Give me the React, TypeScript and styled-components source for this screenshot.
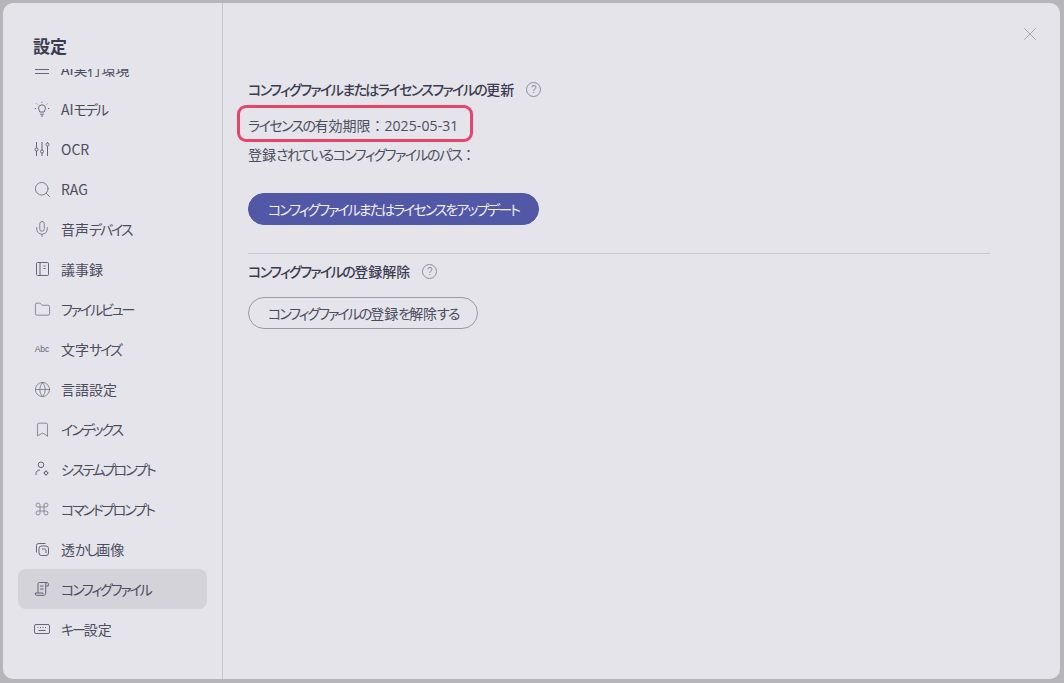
import { ReactNode } from "react";
import styled, { createGlobalStyle } from "styled-components";
import { Bookmark, Command, Folder, Globe, Mic, Search, X } from "lucide-react";

const GlobalStyle = createGlobalStyle`
  html, body {
    margin: 0;
    padding: 0;
    height: 100%;
    overflow: hidden;
    background: #b6b6ba;
  }
  * {
    box-sizing: border-box;
  }
`;

const Backdrop = styled.div`
  width: 1064px;
  height: 683px;
  padding: 3px 4px 4px 3px;
  font-family: "Noto Sans CJK JP", "Noto Sans", sans-serif;
  color: #4c4c60;
`;

const Modal = styled.div`
  position: relative;
  display: flex;
  height: 100%;
  background: #e4e4ea;
  border-radius: 10px;
  overflow: hidden;
`;

const Sidebar = styled.aside`
  display: flex;
  flex-direction: column;
  width: 220px;
  height: 100%;
  padding: 31px 15px 0;
  border-right: 1px solid #c6c6cc;
`;

const SidebarTitle = styled.h2`
  margin: 0 0 11px 15px;
  font-size: 17px;
  line-height: 24px;
  font-weight: 700;
  color: #3c3c50;
`;

const MenuClip = styled.div`
  flex: 1;
  overflow: hidden;
`;

const Menu = styled.ul`
  list-style: none;
  margin: -20px 0 0;
  padding: 0;
`;

const MenuItem = styled.li<{ $active?: boolean }>`
  --kana-track: -2.1px;
  display: flex;
  align-items: center;
  gap: 11px;
  width: 189px;
  height: 40px;
  padding-left: 16px;
  border-radius: 8px;
  font-size: 14px;
  background: ${(props) => (props.$active ? "#d3d3d9" : "transparent")};
`;

const IconSlot = styled.span`
  display: flex;
  align-items: center;
  justify-content: center;
  flex: none;
  width: 16px;
  height: 16px;
  color: #66667a;

  svg {
    flex: none;
  }
`;

const AbcGlyph = styled.span`
  font-family: "Liberation Sans", sans-serif;
  font-size: 8.5px;
  color: #66667a;
`;

// kana in the reference are condensed, kanji keep their full width
const KanaRun = styled.span`
  font-feature-settings: "palt";
  letter-spacing: var(--kana-track, -1.6px);
`;

const Main = styled.main`
  flex: 1;
  padding: 75px 70px 0 25px;
`;

const SectionTitle = styled.div`
  display: flex;
  align-items: center;
  gap: 12px;
  height: 22px;
  font-size: 14px;
  font-weight: 500;
  color: #3c3c50;
`;

const HelpMark = styled.span`
  display: inline-flex;
  align-items: center;
  justify-content: center;
  width: 15px;
  height: 15px;
  border: 1px solid #8e8e9e;
  border-radius: 50%;
  font-family: "Liberation Sans", sans-serif;
  font-size: 10px;
  font-weight: 400;
  color: #8e8e9e;
`;

const InfoLine = styled.p`
  margin: 0;
  height: 30px;
  line-height: 30px;
  font-size: 14px;
`;

const LicenseLine = styled(InfoLine)`
  position: relative;
  margin-top: 10px;
  margin-bottom: -1px;
`;

const DateText = styled.span`
  font-family: "Open Sans", sans-serif;
  font-size: 14px;
  letter-spacing: 0.1px;
`;

const Highlight = styled.span`
  position: absolute;
  left: -11px;
  top: -5px;
  width: 236px;
  height: 37px;
  border: 3px solid #e8436b;
  border-radius: 9px;
`;

const PillButton = styled.button<{ $primary?: boolean }>`
  --kana-track: -2px;
  display: block;
  height: 32px;
  padding: 0 19px;
  border-radius: 16px;
  font-family: inherit;
  font-size: 14px;
  color: ${(props) => (props.$primary ? "#f0f0f6" : "#4c4c60")};
  background: ${(props) => (props.$primary ? "#5257a6" : "transparent")};
  border: 1px solid ${(props) => (props.$primary ? "#5257a6" : "#9a9aa6")};
`;

const UpdateBlock = styled.div`
  margin-top: 24px;
`;

const Divider = styled.hr`
  margin: 28px 0 6px;
  border: 0;
  border-top: 1px solid #c6c6cc;
`;

const UnregisterRow = styled.div`
  margin-top: 15px;
`;

const CloseButton = styled.span`
  position: absolute;
  top: 20px;
  right: 19px;
  display: flex;
  color: #a2a2ae;
`;

const Icon = styled.svg.attrs({ fill: "none", stroke: "currentColor" })``;

const Jp = ({ text }: { text: string }) => (
  <span>
    {text.split(/([\u3040-\u30ff]+)/).map((part, index) =>
      /[\u3040-\u30ff]/.test(part) ? <KanaRun key={index}>{part}</KanaRun> : part
    )}
  </span>
);

const RuntimeIcon = () => (
  <Icon width="16" height="16" viewBox="0 0 16 16">
    <path d="M1 4.5h14M1 8.5h14M1 12.5h14" />
  </Icon>
);

const BulbIcon = () => (
  <Icon width="16" height="16" viewBox="0 0 16 16">
    <path d="M5.8 11c0-1.4-1.3-2-1.3-3.7a3.5 3.5 0 0 1 7 0c0 1.7-1.3 2.3-1.3 3.7zM6.2 13.2h3.6M7 15h2" />
    <path d="M8 .8v1M2.4 2.6l.8.8M13.6 2.6l-.8.8M.8 7.5h1.2M14 7.5h1.2" />
  </Icon>
);

const SlidersIcon = () => (
  <Icon width="16" height="16" viewBox="0 0 16 16">
    <path d="M2.5 1v6M2.5 10v5M8 1v8M8 12v3M13.5 1v1M13.5 5v10" />
    <circle cx="2.5" cy="8.5" r="1.5" />
    <circle cx="8" cy="10.5" r="1.5" />
    <circle cx="13.5" cy="3.5" r="1.5" />
  </Icon>
);

const NotebookIcon = () => (
  <Icon width="15" height="16" viewBox="0 0 15 16">
    <rect x="1.5" y="1.5" width="12" height="13" rx="1" />
    <path d="M5 1.5v13M8.5 5h2M8.5 7.5h2" />
  </Icon>
);

const UserGearIcon = () => (
  <Icon width="16" height="16" viewBox="0 0 16 16">
    <circle cx="7" cy="3.8" r="2.8" />
    <path d="M2 14v-1.5C2 10.5 3.5 9 6 9" />
    <circle cx="12" cy="12" r="1.6" />
    <path d="M12 9.2v1.2M12 13.6v1.2M9.4 12h1M13.6 12h1" />
  </Icon>
);

const LayersIcon = () => (
  <Icon width="15" height="15" viewBox="0 0 15 15">
    <path d="M10.5 1.5h-7a2 2 0 0 0-2 2v7" />
    <rect x="4" y="4" width="9.5" height="9.5" rx="2.5" />
    <path d="M7 7h2.5a1.5 1.5 0 0 1 1.5 1.5V11" />
  </Icon>
);

const ScrollIcon = () => (
  <Icon width="16" height="16" viewBox="0 0 16 16">
    <path d="M4 12V2.8C4 2 4.6 1.5 5.4 1.5H13c-.8 0-1.3.6-1.3 1.4V12.5c0 1-.7 1.8-1.7 1.8H2.5c-.8 0-1.2-.7-1.2-1.3V12H9v1" />
    <path d="M12 5h2.3V3c0-.9-.5-1.5-1.3-1.5M6 5h3.5M6 8h3.5" />
  </Icon>
);

const KeyboardIcon = () => (
  <Icon width="16" height="12" viewBox="0 0 16 12">
    <rect x=".5" y="1.5" width="15" height="9" rx="1.5" />
    <path d="M3.5 4.5h1M6 4.5h1M8.5 4.5h1M11 4.5h1M4.5 7.5h7" />
  </Icon>
);

const items: { label: string; icon: ReactNode; active?: boolean }[] = [
  { label: "AI実行環境", icon: <RuntimeIcon /> },
  { label: "AIモデル", icon: <BulbIcon /> },
  { label: "OCR", icon: <SlidersIcon /> },
  { label: "RAG", icon: <Search size={19} strokeWidth={1} /> },
  { label: "音声デバイス", icon: <Mic size={18} strokeWidth={1} /> },
  { label: "議事録", icon: <NotebookIcon /> },
  { label: "ファイルビュー", icon: <Folder size={17} strokeWidth={1} /> },
  { label: "文字サイズ", icon: <AbcGlyph>Abc</AbcGlyph> },
  { label: "言語設定", icon: <Globe size={17} strokeWidth={1} /> },
  { label: "インデックス", icon: <Bookmark size={17} strokeWidth={1} /> },
  { label: "システムプロンプト", icon: <UserGearIcon /> },
  { label: "コマンドプロンプト", icon: <Command size={16} strokeWidth={1} /> },
  { label: "透かし画像", icon: <LayersIcon /> },
  { label: "コンフィグファイル", icon: <ScrollIcon />, active: true },
  { label: "キー設定", icon: <KeyboardIcon /> },
];

const App = () => {
  return (
    <>
      <GlobalStyle />
      <Backdrop>
        <Modal>
          <Sidebar>
            <SidebarTitle>設定</SidebarTitle>
            <MenuClip>
              <Menu>
                {items.map((item) => (
                  <MenuItem key={item.label} $active={item.active}>
                    <IconSlot>{item.icon}</IconSlot>
                    <Jp text={item.label} />
                  </MenuItem>
                ))}
              </Menu>
            </MenuClip>
          </Sidebar>
          <Main>
            <SectionTitle>
              <Jp text="コンフィグファイルまたはライセンスファイルの更新" />
              <HelpMark>?</HelpMark>
            </SectionTitle>
            <LicenseLine>
              <Highlight />
              <Jp text="ライセンスの有効期限：" />
              <DateText>2025-05-31</DateText>
            </LicenseLine>
            <InfoLine>
              <Jp text="登録されているコンフィグファイルのパス：" />
            </InfoLine>
            <UpdateBlock>
              <PillButton $primary>
                <Jp text="コンフィグファイルまたはライセンスをアップデート" />
              </PillButton>
            </UpdateBlock>
            <Divider />
            <SectionTitle>
              <Jp text="コンフィグファイルの登録解除" />
              <HelpMark>?</HelpMark>
            </SectionTitle>
            <UnregisterRow>
              <PillButton>
                <Jp text="コンフィグファイルの登録を解除する" />
              </PillButton>
            </UnregisterRow>
          </Main>
          <CloseButton>
            <X size={22} strokeWidth={1} />
          </CloseButton>
        </Modal>
      </Backdrop>
    </>
  );
};

export default App;
